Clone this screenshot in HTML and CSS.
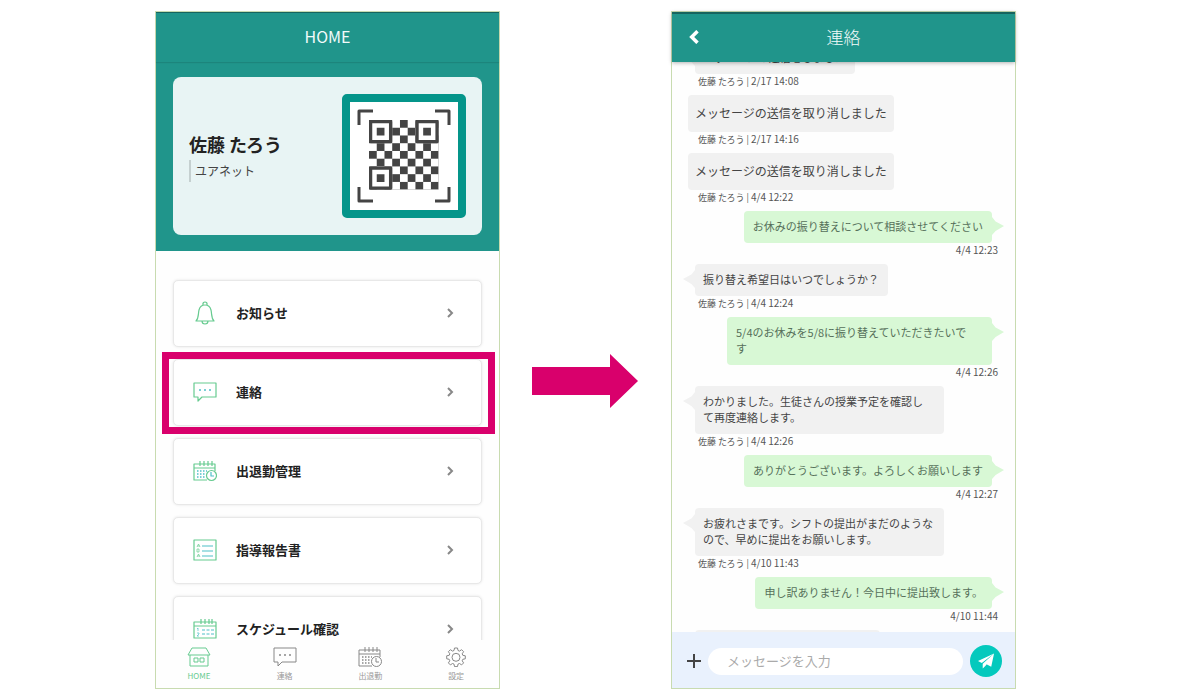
FILE: index.html
```
<!DOCTYPE html>
<html lang="ja">
<head>
    <meta charset="UTF-8">
    <meta name="viewport" content="width=device-width, initial-scale=1.0">
    <title>HOME / 連絡</title>
    <link rel="stylesheet" href="styles.css">
</head>
<body>

<!-- icons used more than once -->
<svg class="defs" aria-hidden="true">
    <symbol id="icon-chat" viewBox="0 0 24 20">
        <path d="M1 1h22v14H9l-4 4v-4H1z"/>
        <path class="accent dots" d="M7 8h0M12 8h0M17 8h0"/>
    </symbol>
    <symbol id="icon-attend" viewBox="0 0 24 20">
        <path d="M14 19H1V3h21v7M1 7h21M7 0v5M11 0v5M15 0v5M19 0v5"/>
        <path class="accent grid-dots" d="M4 10h10M4 13h8M4 16h8"/>
        <circle cx="18.500" cy="14.500" r="5"/>
        <path class="accent" d="M18 11v4h3"/>
    </symbol>
    <symbol id="icon-next" viewBox="0 0 8 10">
        <path d="M2 1l4 4-4 4"/>
    </symbol>
</svg>

<main class="stage">
    <section class="phone home">
        <header class="bar"><h1>HOME</h1></header>
        <div class="hero">
            <div class="profile">
                <div>
                    <p class="name">佐藤 たろう</p>
                    <p class="school">ユアネット</p>
                </div>
                <svg class="qr" viewBox="0 0 108 108" role="img" aria-label="QRコード">
                    <defs>
                        <pattern id="check" width="2" height="2" patternUnits="userSpaceOnUse">
                            <path d="M0 0h1v1H0zM1 1h1v1H1z" fill="#444"/>
                        </pattern>
                    </defs>
                    <path d="M9 23V9h14M85 9h14v14M99 85v14H85M23 99H9V85" fill="none" stroke="#444" stroke-width="3"/>
                    <g transform="translate(19 18) scale(7.740)">
                        <rect width="9" height="9" fill="url(#check)"/>
                        <g fill="#fff" stroke="#444" stroke-width=".42">
                            <path d="M.21 .21h2.580v2.580H.21zM6.210 .21h2.580v2.580H6.210zM.21 6.210h2.580v2.580H.21z"/>
                        </g>
                        <path d="M1 1h1v1H1zM7 1h1v1H7zM1 7h1v1H1z" fill="#444"/>
                    </g>
                </svg>
            </div>
        </div>
        <div class="menu">
            <button class="menu-item">
                <svg class="icon" viewBox="0 0 24 24"><path d="M3 20c3-3 2-7 3-11 1-4 3-5 6-5s5 1 6 5c1 4 0 8 3 11zM10 4c-1-4 5-4 4 0M9 20c0 4 6 4 6 0"/></svg>
                <span>お知らせ</span>
                <svg class="next"><use href="#icon-next"/></svg>
            </button>
            <button class="menu-item marked">
                <svg class="icon"><use href="#icon-chat"/></svg>
                <span>連絡</span>
                <svg class="next"><use href="#icon-next"/></svg>
            </button>
            <button class="menu-item">
                <svg class="icon"><use href="#icon-attend"/></svg>
                <span>出退勤管理</span>
                <svg class="next"><use href="#icon-next"/></svg>
            </button>
            <button class="menu-item">
                <svg class="icon" viewBox="0 0 24 20">
                    <path d="M1 0h22v20H1z"/>
                    <path class="thin" d="M4 7l1.500-3L7 7M4.500 6h2M4 9h2v3H4zM4 17l1.500-3L7 17M4.500 16h2"/>
                    <path class="accent" d="M9 6h11M9 11h11M9 16h11"/>
                </svg>
                <span>指導報告書</span>
                <svg class="next"><use href="#icon-next"/></svg>
            </button>
            <button class="menu-item">
                <svg class="icon" viewBox="0 0 24 20">
                    <path d="M1 3h22v16H1zM1 7h22M8 0v5M12 0v5M16 0v5M19 0v5"/>
                    <path class="accent dashes" d="M9 11h12M9 15h12"/>
                    <path class="thin accent" d="M4 10l1-1v3M4 14h2v1l-2 2h2"/>
                </svg>
                <span>スケジュール確認</span>
                <svg class="next"><use href="#icon-next"/></svg>
            </button>
        </div>
        <nav class="tabs">
            <a href="#" class="active">
                <svg class="icon" viewBox="0 0 24 20"><path d="M5 1h14l4 7H1zM3 8v11h18V8M7 11h4v4H7zM13 11h4v4h-4z"/></svg>
                HOME
            </a>
            <a href="#"><svg class="icon"><use href="#icon-chat"/></svg>連絡</a>
            <a href="#"><svg class="icon"><use href="#icon-attend"/></svg>出退勤</a>
            <a href="#">
                <svg class="icon" viewBox="0 0 20 20">
                    <path d="M8.500 1h3l.5 2.500 1.500.6 2.100-1.400 2 2-1.400 2.100.6 1.500 2.500.5v3l-2.500.5-.6 1.500 1.400 2.100-2 2-2.100-1.400-1.500.6-.5 2.500h-3L8 17.100l-1.500-.6-2.100 1.400-2-2 1.400-2.100-.6-1.500L.7 11.800v-3l2.500-.5.6-1.500-1.400-2.100 2-2 2.100 1.400L8 3.500z"/>
                    <circle cx="10" cy="10.300" r="4"/>
                </svg>
                設定
            </a>
        </nav>
    </section>

    <svg class="arrow" viewBox="0 0 106 54" aria-hidden="true"><path d="M0 13h78V0l28 27-28 27V41H0z" fill="#d9006c"/></svg>

    <section class="phone talk">
        <header class="bar">
            <button class="back" aria-label="戻る"><svg viewBox="0 0 10 12"><path d="M8 1L3 6l5 5"/></svg></button>
            <h1>連絡</h1>
        </header>
        <div class="talk-body">
            <ul class="messages">
                <li class="received"><p>メッセージの送信をしました</p><small>佐藤 たろう | <time>2/17 14:08</time></small></li>
                <li class="canceled"><p>メッセージの送信を取り消しました</p><small>佐藤 たろう | <time>2/17 14:16</time></small></li>
                <li class="canceled"><p>メッセージの送信を取り消しました</p><small>佐藤 たろう | <time>4/4 12:22</time></small></li>
                <li class="sent"><p>お休みの振り替えについて相談させてください</p><small><time>4/4 12:23</time></small></li>
                <li class="received"><p>振り替え希望日はいつでしょうか？</p><small>佐藤 たろう | <time>4/4 12:24</time></small></li>
                <li class="sent wide"><p>5/4のお休みを5/8に振り替えていただきたいで<br>す</p><small><time>4/4 12:26</time></small></li>
                <li class="received"><p>わかりました。生徒さんの授業予定を確認し<span class="keep">て再度</span>連絡します。</p><small>佐藤 たろう | <time>4/4 12:26</time></small></li>
                <li class="sent"><p>ありがとうございます。よろしくお願いします</p><small><time>4/4 12:27</time></small></li>
                <li class="received"><p>お疲れさまです。シフトの提出がまだのようなので、早めに提出をお願いします。</p><small>佐藤 たろう | <time>4/10 11:43</time></small></li>
                <li class="sent"><p>申し訳ありません！今日中に提出致します。</p><small><time>4/10 11:44</time></small></li>
                <li class="received next-message"><p></p></li>
            </ul>
        </div>
        <form class="composer">
            <button type="button" class="add" aria-label="追加"><svg viewBox="0 0 16 16"><path d="M8 1v14M1 8h14"/></svg></button>
            <input type="text" placeholder="メッセージを入力" aria-label="メッセージを入力">
            <button type="button" class="send" aria-label="送信"><svg viewBox="0 0 18 16"><path d="M17 0L0 8l4 2zM17 0L5 11v5l3-3zM17 0L8 11l6 3z"/></svg></button>
        </form>
    </section>
</main>

</body>
</html>
```
FILE: styles.css
```
* {
    box-sizing: border-box;
}
body {
    margin: 0;
    background-color: #fff;
    font-family: "Noto Sans CJK JP", "Noto Sans", sans-serif;
    color: #222;
}
h1, p, ul {
    margin: 0;
    padding: 0;
}
button {
    border: none;
    padding: 0;
    background: none;
    font-family: inherit;
    color: inherit;
    cursor: pointer;
}
svg {
    display: block;
    fill: none;
    stroke-linejoin: round;
}
.defs {
    position: absolute;
    width: 0;
    height: 0;
}
.stage {
    display: grid;
    grid-template-columns: 155fr 345fr 171fr 345fr 184fr;
    height: 100vh;
    min-height: 500px;
    padding: 11px 0 10px;
}
.phone {
    display: flex;
    flex-direction: column;
    min-width: 0;
    min-height: 0;
    border: 1px solid #c8dbb0;
    background-color: #fefefe;
}
.home {
    grid-column: 2;
}
.talk {
    grid-column: 4;
}
.arrow {
    grid-column: 3;
    place-self: center;
    width: 62%;
    margin-top: 62px;
}

/* header */
.bar {
    position: relative;
    z-index: 1;
    display: flex;
    flex: none;
    align-items: center;
    justify-content: center;
    height: 50px;
    padding-bottom: 2px;
    border-top: 2px solid #17645f;
    background-color: #20958b;
    box-shadow: 0 1px 4px rgba(0, 0, 0, 0.3);
    color: #f2fbfa;
}
.home .bar {
    padding-bottom: 4px;
    border-top-width: 1px;
    box-shadow: 0 1px 1px rgba(0, 0, 0, 0.1);
}
.bar h1 {
    font-size: 16px;
    line-height: 24px;
    font-weight: 400;
}
.talk h1 {
    font-size: 17px;
    font-weight: 300;
}
.back {
    position: absolute;
    left: 16px;
}
.back svg {
    width: 12px;
    height: 14px;
    stroke: #fff;
    stroke-width: 3;
    stroke-linejoin: miter;
}

/* profile card */
.hero {
    flex: none;
    padding: 15px 17px 16px;
    background-color: #20958b;
}
.profile {
    display: flex;
    align-items: center;
    justify-content: space-between;
    padding: 17px 16px;
    border-radius: 8px;
    background-color: #e8f4f4;
}
.name {
    font-size: 18px;
    line-height: 26px;
    font-weight: 700;
}
.school {
    margin-top: 3px;
    padding-left: 4px;
    border-left: 2px solid #c5d0d0;
    font-size: 12px;
    line-height: 22px;
    color: #444;
}
.qr {
    width: 124px;
    height: 124px;
    border: 8px solid #04958a;
    border-radius: 5px;
    background-color: #fff;
}

/* menu */
.menu {
    display: flex;
    flex: 1;
    flex-direction: column;
    gap: 12px;
    min-height: 0;
    padding: 29px 17px 0;
    overflow: hidden;
}
.menu-item {
    position: relative;
    display: flex;
    flex: none;
    align-items: center;
    height: 67px;
    padding: 0 27px 2px 19px;
    border: 1px solid #e8e8e8;
    border-radius: 5px;
    background-color: #fff;
    box-shadow: 0 0 3px rgba(0, 0, 0, 0.1);
    font-size: 13px;
    font-weight: 700;
}
.menu-item span {
    flex: 1;
    padding-left: 19px;
    text-align: left;
}
.icon {
    --accent: #4fc0c8;
    width: 24px;
    height: 24px;
    stroke: #67cb90;
    stroke-width: 1.2;
}
.accent {
    stroke: var(--accent);
}
.thin {
    stroke-width: 0.7;
}
.dots {
    stroke-width: 2;
    stroke-linecap: round;
}
.grid-dots {
    stroke-width: 1.5;
    stroke-dasharray: 1.5 1.5;
}
.dashes {
    stroke-dasharray: 3 1.5;
}
.next {
    width: 8px;
    height: 10px;
    stroke: #888;
    stroke-width: 2;
    stroke-linejoin: miter;
}
.marked::after {
    content: "";
    position: absolute;
    inset: -8px -14px -9px -12px;
    border: 7px solid #d9006c;
}

/* bottom tabs */
.tabs {
    display: grid;
    flex: none;
    grid-template-columns: repeat(4, 1fr);
    height: 48px;
    padding-top: 7px;
    background-color: #fefefe;
}
.tabs a {
    display: flex;
    flex-direction: column;
    align-items: center;
    gap: 3px;
    font-size: 8px;
    line-height: 12px;
    color: #999;
    text-decoration: none;
}
.tabs .icon {
    --accent: #888;
    height: 20px;
    stroke: #888;
    stroke-width: 1;
}
.tabs .active {
    color: #67cb90;
}
.tabs .active .icon {
    stroke: #67cb90;
}

/* messages */
.talk-body {
    flex: 1;
    min-height: 0;
    overflow: hidden;
}
.messages {
    display: flex;
    flex-direction: column;
    gap: 7px;
    margin-top: -20px;
    padding: 0 17px 0 23px;
    list-style: none;
}
.messages li {
    display: flex;
    flex-direction: column;
    align-items: flex-start;
}
.messages p {
    position: relative;
    max-width: 249px;
    padding: 7px 9px 9px 8px;
    border-radius: 4px;
    background-color: #f1f1f1;
    font-size: 11px;
    line-height: 16px;
    color: #444;
}
.messages small {
    height: 14px;
    padding-left: 3px;
    font-size: 9px;
    line-height: 14px;
    color: #555;
}
.messages time {
    font-size: 10px;
}
.messages .canceled p {
    max-width: none;
    margin-left: -7px;
    padding: 7px 7px 9px;
    font-size: 12px;
    line-height: 21px;
}
.messages .sent {
    align-items: flex-end;
}
.messages .sent p {
    max-width: 265px;
    margin-right: 6px;
    padding: 7px 9px 9px;
    background-color: #d8f8d5;
    color: #56705a;
}
.messages .wide p {
    width: 265px;
}
.messages .next-message p {
    width: 185px;
    height: 32px;
}
.received p::before,
.sent p::after {
    content: "";
    position: absolute;
    top: 6px;
    width: 12px;
    height: 18px;
    background-color: inherit;
}
.received p::before {
    left: -12px;
    clip-path: polygon(100% 0, 70% 25%, 0 50%, 70% 78%, 100% 100%);
}
.sent p::after {
    right: -12px;
    clip-path: polygon(0 0, 30% 25%, 100% 50%, 30% 78%, 0 100%);
}
.keep {
    white-space: nowrap;
}

/* input row */
.composer {
    display: flex;
    flex: none;
    align-items: center;
    height: 56px;
    padding: 2px 13px 0 14px;
    background-color: #e9f1fd;
}
.add svg {
    width: 16px;
    height: 16px;
    stroke: #444;
    stroke-width: 2;
}
.composer input {
    flex: 1;
    min-width: 0;
    height: 27px;
    margin: 0 7px 0 6px;
    padding: 0 19px 2px;
    border: none;
    border-radius: 14px;
    background-color: #fff;
    font-family: inherit;
    font-size: 13px;
}
.composer input::placeholder {
    color: #aaa;
}
.send {
    display: flex;
    align-items: center;
    justify-content: center;
    width: 32px;
    height: 32px;
    border-radius: 50%;
    background-color: #04c9bd;
}
.send svg {
    width: 17px;
    height: 16px;
    fill: #fff;
}
```
